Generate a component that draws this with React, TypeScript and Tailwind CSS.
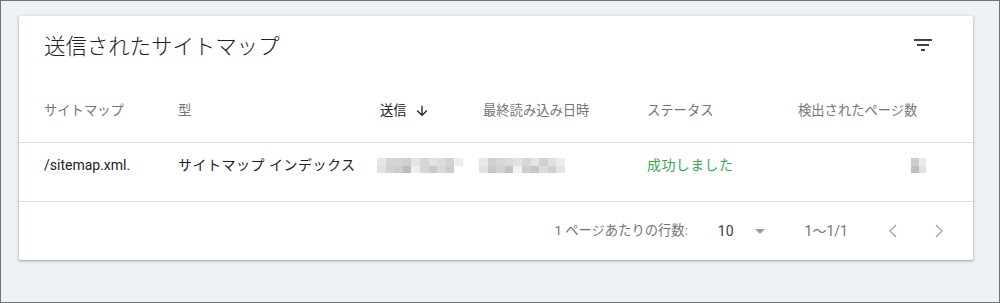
const font = { fontFamily: 'Roboto, "Noto Sans CJK JP", sans-serif' };

const block1 = [
  ["#e6e6e6", "#d4d4d4", "#d4d4d4", "#cfcfcf", "#e4e4e4", "#d6d6d6", "#e2e2e2", "#dcdcdc", "#d2d2d2", "#eeeeee"],
  ["#e0e0e0", "#d2d2d2", "#cdcdcd", "#bdbdbd", "#eeeeee", "#d6d6d6", "#c9c9c9", "#d8d8d8", "#cccccc", "#ffffff"],
];
const block2 = [
  ["#e8e8e8", "#d0d0d0", "#d6d6d6", "#dadada", "#e2e2e2", "#d8d8d8", "#e4e4e4", "#d0d0d0", "#e0e0e0", "#ececec"],
  ["#e2e2e2", "#c8c8c8", "#d2d2d2", "#c4c4c4", "#f2f2f2", "#cfcfcf", "#c6c6c6", "#dcdcdc", "#d0d0d0", "#e4e4e4"],
];
const block3 = [
  ["#cdcdcd", "#ebebeb"],
  ["#bfbfbf", "#e2e2e2"],
];

function Pixels({ rows, cell }: { rows: string[][]; cell: string }) {
  return (
    <div className="flex flex-col">
      {rows.map((r, i) => (
        <div key={i} className="flex">
          {r.map((c, j) => (
            <div key={j} className={`${cell} h-[7.5px]`} style={{ backgroundColor: c }} />
          ))}
        </div>
      ))}
    </div>
  );
}

const grid = "grid grid-cols-[134px_202px_103px_164px_151px_1fr] pl-[25px]";

export default function App() {
  return (
    <div
      className="w-full h-[303px] bg-[#eef2f6] border border-[#727272] pt-[15px] pl-[18px] pr-[26px]"
      style={font}
    >
      <div className="bg-white rounded-[2px] shadow-[0_1px_2px_rgba(60,64,67,0.3),0_1px_3px_1px_rgba(60,64,67,0.15)]">
        {/* title */}
        <div className="h-[63px] flex items-center justify-between pl-[25px] pr-[38px]">
          <h1 className="text-[21.5px] font-light text-[#202124] tracking-[-0.1px]">送信されたサイトマップ</h1>
          <svg width="24" height="24" viewBox="0 0 24 24" className="mb-[5px] fill-[#3c4043]">
            <path d="M10 18h4v-2h-4v2zM3 6v2h18V6H3zm3 7h12v-2H6v2z" />
          </svg>
        </div>

        {/* header */}
        <div className={`${grid} h-[63px] items-center text-[13.3px] text-[#757575]`}>
          <div>サイトマップ</div>
          <div>型</div>
          <div className="flex items-center text-[#202124]">
            <span>送信</span>
            <svg width="16" height="16" viewBox="0 0 24 24" className="ml-[7px] fill-[#202124]">
              <path d="M20 12l-1.41-1.41L13 16.17V4h-2v12.17l-5.58-5.59L4 12l8 8 8-8z" />
            </svg>
          </div>
          <div>最終読み込み日時</div>
          <div>ステータス</div>
          <div>検出されたページ数</div>
        </div>

        {/* row */}
        <div className={`${grid} h-[60px] border-y border-[#e0e0e0] pt-[12px] items-start text-[14px] leading-[20px] text-[#202124]`}>
          <div>/sitemap.xml.</div>
          <div className="tracking-[0.5px]">サイトマップ インデックス</div>
          <div className="ml-[-3px] mt-[3px]">
            <Pixels rows={block1} cell="w-[8.6px]" />
          </div>
          <div className="ml-[-4px] mt-[3px]">
            <Pixels rows={block2} cell="w-[8.6px]" />
          </div>
          <div className="text-[#34a853] tracking-[0.4px]">成功しました</div>
          <div className="ml-[113px] mt-[3px]">
            <Pixels rows={block3} cell="w-[7.5px]" />
          </div>
        </div>

        {/* footer */}
        <div className="h-[58px] flex items-center justify-end pr-[22px] text-[13.3px] text-[#757575]">
          <span>1 ページあたりの行数:</span>
          <span className="ml-[30px] text-[14px] text-[#3c4043]">10</span>
          <svg width="24" height="24" viewBox="0 0 24 24" className="ml-[14px] fill-[#9e9e9e]">
            <path d="M7 10l5 5 5-5z" />
          </svg>
          <span className="ml-[33px] text-[14px]">1〜1/1</span>
          <svg width="24" height="24" viewBox="0 0 24 24" fill="none" stroke="#a0a4a8" strokeWidth="1.4" className="ml-[33px]">
            <path d="M15 18l-6-6 6-6" />
          </svg>
          <svg width="24" height="24" viewBox="0 0 24 24" fill="none" stroke="#a0a4a8" strokeWidth="1.4" className="ml-[22px]">
            <path d="M9 18l6-6-6-6" />
          </svg>
        </div>
      </div>
    </div>
  );
}
